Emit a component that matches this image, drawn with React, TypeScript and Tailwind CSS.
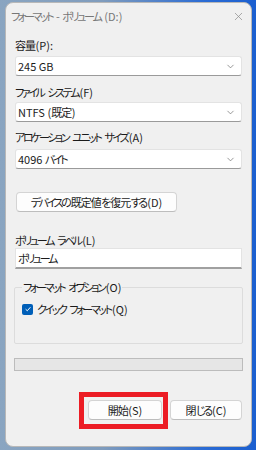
import { ChevronDown, X } from "lucide-react";

const font = "font-['Yu_Gothic_UI','Noto_Sans_CJK_JP',sans-serif] [font-feature-settings:'palt']";

function J({ text }: { text: string }) {
  const parts = text.split(/([\u3000-\u30ff\uff00-\uffef]+|[\u4e00-\u9fff]+)/);
  return (
    <>
      {parts.map((p, i) => {
        if (i % 2 === 0) return <span key={i}>{p}</span>;
        const kanji = /[\u4e00-\u9fff]/.test(p);
        return (
          <span key={i}>
            <span className={kanji ? "tracking-[-1px]" : "tracking-[-2.4px]"}>{p.slice(0, -1)}</span>
            <span className={kanji ? "tracking-[-0.5px]" : "tracking-[-1px]"}>{p.slice(-1)}</span>
          </span>
        );
      })}
    </>
  );
}

function Select({ value }: { value: string }) {
  return (
    <div className="mx-[9px] flex h-[20px] items-center justify-between rounded-[3px] border border-[#e3e3e3] border-b-[#9a9a9a] bg-white pl-[2px] pr-[5px] text-[11px] text-[#1b1b1b]">
      <span>
        <J text={value} />
      </span>
      <ChevronDown className="h-[11px] w-[11px] text-[#6b6b6b]" strokeWidth={1.5} />
    </div>
  );
}

function Label({ text, className = "" }: { text: string; className?: string }) {
  return (
    <div className={`ml-[9px] h-[16px] text-[11px] leading-[16px] text-[#1b1b1b] ${className}`}>
      <J text={text} />
    </div>
  );
}

const btn =
  "flex h-[20px] items-center justify-center rounded-[4px] border border-[#d4d4d4] border-b-[#bdbdbd] bg-[#fdfdfd] text-[11px] text-[#1b1b1b]";

export default function App() {
  return (
    <div className={`h-[450px] w-[256px] overflow-hidden bg-[linear-gradient(90deg,#8aa5c1,#7f9cbd_40%,#2a6bd4_80%,#1b5fcf)] pt-[2px] ${font}`}>
      <div className="ml-[5px] flex h-[445px] w-[247px] flex-col rounded-[8px] border border-[#b8b8b8] bg-[#f0f0f0]">
        {/* title bar */}
        <div className="flex h-[27px] items-center justify-between pl-[5px] pr-[6px]">
          <span className="text-[11px] text-[#777]">
            <J text="フォーマット - ボリューム (D:)" />
          </span>
          <X className="h-[13px] w-[13px] text-[#8a8a8a]" strokeWidth={1.3} />
        </div>

        <Label className="mt-[7px]" text="容量(P):" />
        <div className="mt-[3px]">
          <Select value="245 GB" />
        </div>

        <Label className="mt-[8px]" text="ファイル システム(F)" />
        <div className="mt-[2px]">
          <Select value="NTFS (既定)" />
        </div>

        <Label className="mt-[7px]" text="アロケーション ユニット サイズ(A)" />
        <div className="mt-[4px]">
          <Select value="4096 バイト" />
        </div>

        <button className={`${btn} ml-[10px] mt-[23px] w-[161px]`}>
          <J text="デバイスの既定値を復元する(D)" />
        </button>

        <Label className="mt-[20px]" text="ボリューム ラベル(L)" />
        <div className="mx-[9px] flex h-[21px] items-center border border-[#e3e3e3] border-b-[2px] border-b-[#a0a0a0] bg-white pl-[2px] text-[11px] text-[#1b1b1b]">
          <J text="ボリューム" />
        </div>

        <fieldset className="mx-[8px] mt-[10px] h-[65px] rounded-[2px] border border-[#dcdcdc] px-[7px]">
          <legend className="px-[1px] text-[11px] leading-[16px] text-[#1b1b1b]">
            <J text="フォーマット オプション(O)" />
          </legend>
          <div className="mt-[6px] flex items-center gap-[4px]">
            <div className="flex h-[11px] w-[11px] items-center justify-center rounded-[2px] bg-[#005fb8]">
              <svg viewBox="0 0 10 10" className="h-[8px] w-[8px]">
                <path d="M2 5.2 L4.1 7.2 L8 2.8" fill="none" stroke="white" strokeWidth="1.2" />
              </svg>
            </div>
            <span className="text-[11px] text-[#1b1b1b]">
              <J text="クイック フォーマット(Q)" />
            </span>
          </div>
        </fieldset>

        <div className="mx-[8px] mt-[14px] h-[13px] border border-[#bcbcbc] bg-[#e6e6e6]" />

        <div className="mt-[29px] flex justify-end gap-[8px] pr-[9px]">
          <div className="relative">
            <button className={`${btn} w-[74px]`}>
              <J text="開始(S)" />
            </button>
            <div className="absolute -bottom-[9px] -left-[9px] -right-[6px] -top-[8px] border-[5px] border-[#ec1c24]" />
          </div>
          <button className={`${btn} w-[72px]`}>
            <J text="閉じる(C)" />
          </button>
        </div>
      </div>
    </div>
  );
}
